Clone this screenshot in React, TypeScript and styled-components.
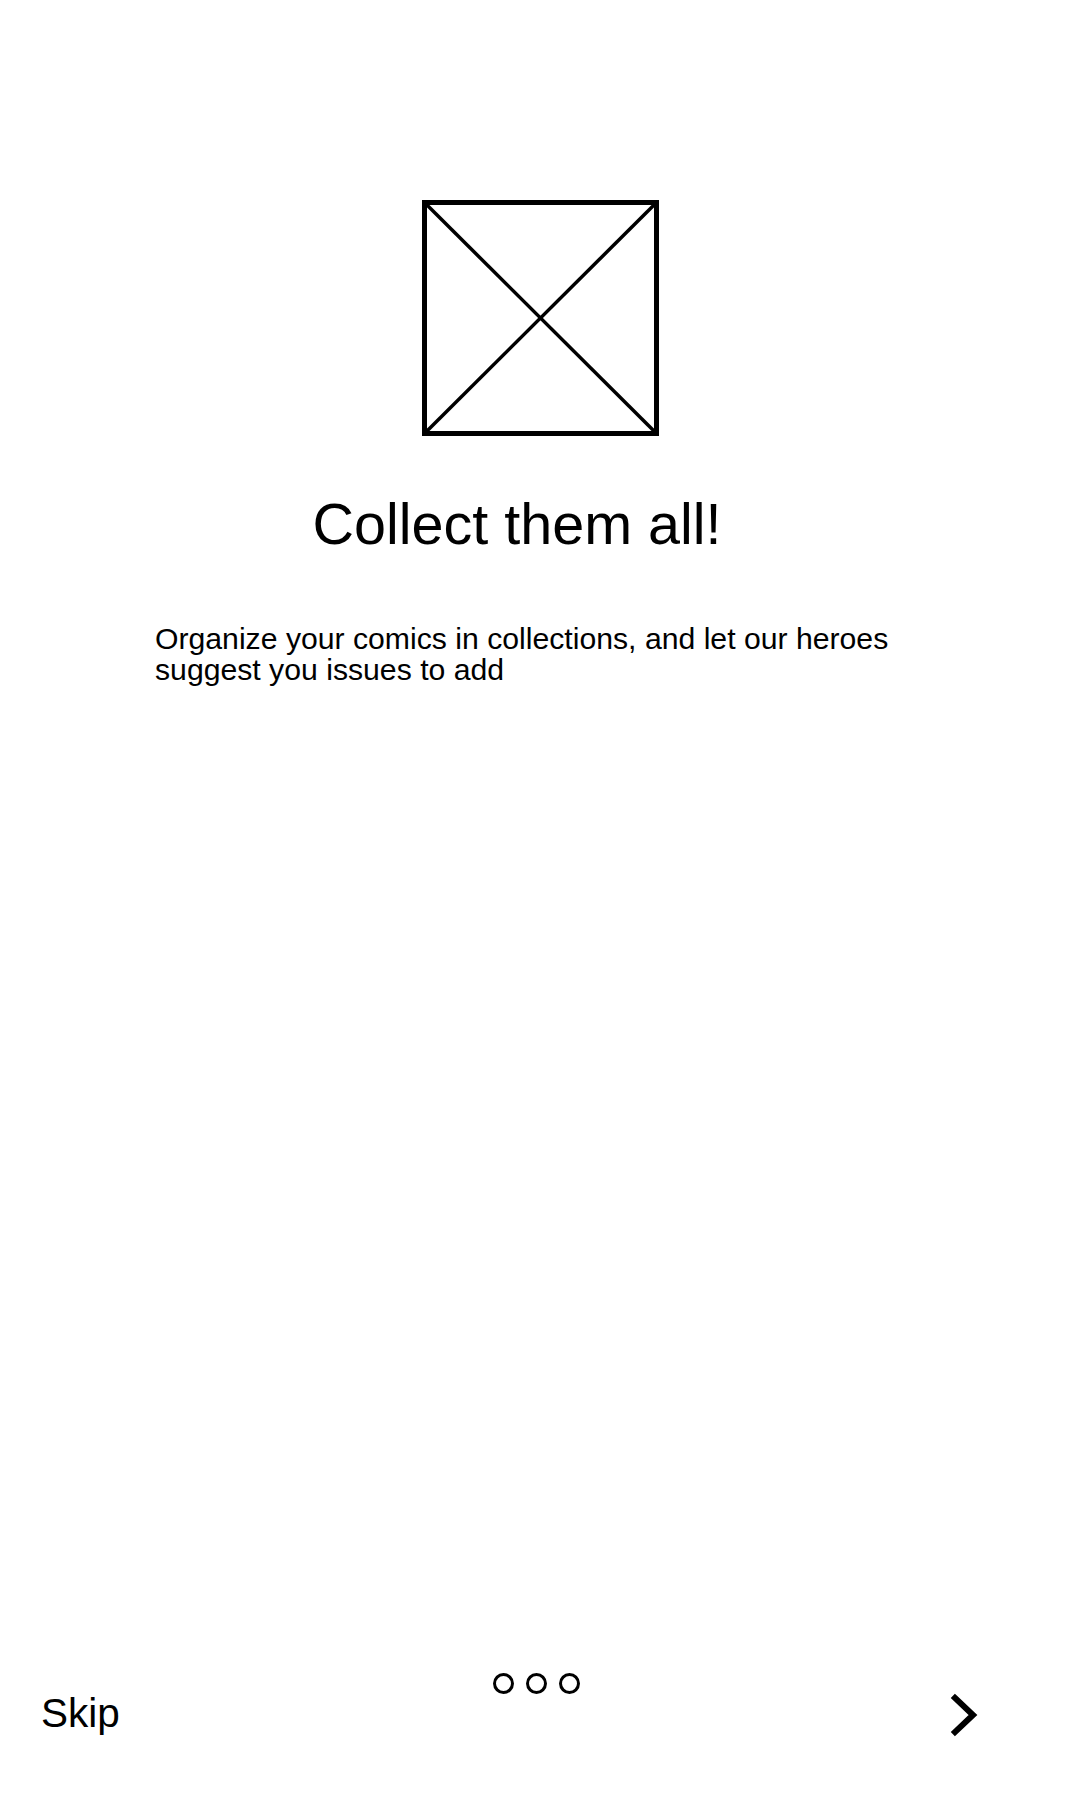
import styled, { createGlobalStyle } from 'styled-components'

const GlobalStyle = createGlobalStyle`
  body {
    margin: 0;
    background: #fff;
    color: #000;
    font-family: 'Liberation Sans', Arial, sans-serif;
  }
`

const Screen = styled.div`
  height: 1800px;
  display: flex;
  flex-direction: column;
  background: #fff;
`

const Slide = styled.main`
  flex: 1;
  display: flex;
  flex-direction: column;
  padding-top: 200px;
`

const Illustration = styled.svg`
  align-self: center;
  display: block;
`

const Title = styled.h1`
  margin: 56px 0 0;
  padding-right: 46px;
  font-size: 57.5px;
  font-weight: 400;
  line-height: 64px;
  text-align: center;
`

const Description = styled.p`
  margin: 67px 0 0;
  padding: 0 155px;
  font-size: 30.2px;
  line-height: 31px;
`

const Footer = styled.footer`
  height: 127px;
  display: grid;
  grid-template-columns: 1fr auto 1fr;
  align-items: start;
`

const SkipButton = styled.button`
  justify-self: start;
  margin: 17px 0 0 41px;
  padding: 0;
  border: none;
  background: none;
  font-family: inherit;
  font-size: 40.5px;
  line-height: 46px;
  color: #000;
  cursor: pointer;
`

const Dots = styled.div`
  display: flex;
  gap: 12px;
  margin-right: 8px;
`

const Dot = styled.span<{ active?: boolean }>`
  width: 21px;
  height: 21px;
  box-sizing: border-box;
  border: 3px solid #000;
  border-radius: 50%;
  background: ${(props) => (props.active ? '#000' : 'transparent')};
`

const NextButton = styled.button`
  justify-self: end;
  margin: 17px 95px 0 0;
  padding: 0;
  border: none;
  background: none;
  cursor: pointer;
  display: flex;

  & svg {
    display: block;
  }
`

const PAGES = 3

export default function App() {
  return (
    <Screen>
      <GlobalStyle />
      <Slide>
        <Illustration width={237} height={236} viewBox="0 0 237 236">
          <rect x={2.5} y={2.5} width={232} height={231} fill="none" stroke="#000" strokeWidth={5} />
          <line x1={2} y1={2} x2={235} y2={234} stroke="#000" strokeWidth={3.5} />
          <line x1={235} y1={2} x2={2} y2={234} stroke="#000" strokeWidth={3.5} />
        </Illustration>
        <Title>Collect them all!</Title>
        <Description>
          Organize your comics in collections, and let our heroes suggest you issues to add
        </Description>
      </Slide>
      <Footer>
        <SkipButton>Skip</SkipButton>
        <Dots>
          {Array.from({ length: PAGES }).map((_, i) => (
            <Dot key={i} />
          ))}
        </Dots>
        <NextButton aria-label="Next">
          <svg width={40} height={50} viewBox="0 0 40 50">
            <path
              d="M10 8 L28 25 L10 42"
              fill="none"
              stroke="#000"
              strokeWidth={6}
              strokeLinecap="square"
              strokeLinejoin="miter"
            />
          </svg>
        </NextButton>
      </Footer>
    </Screen>
  )
}
